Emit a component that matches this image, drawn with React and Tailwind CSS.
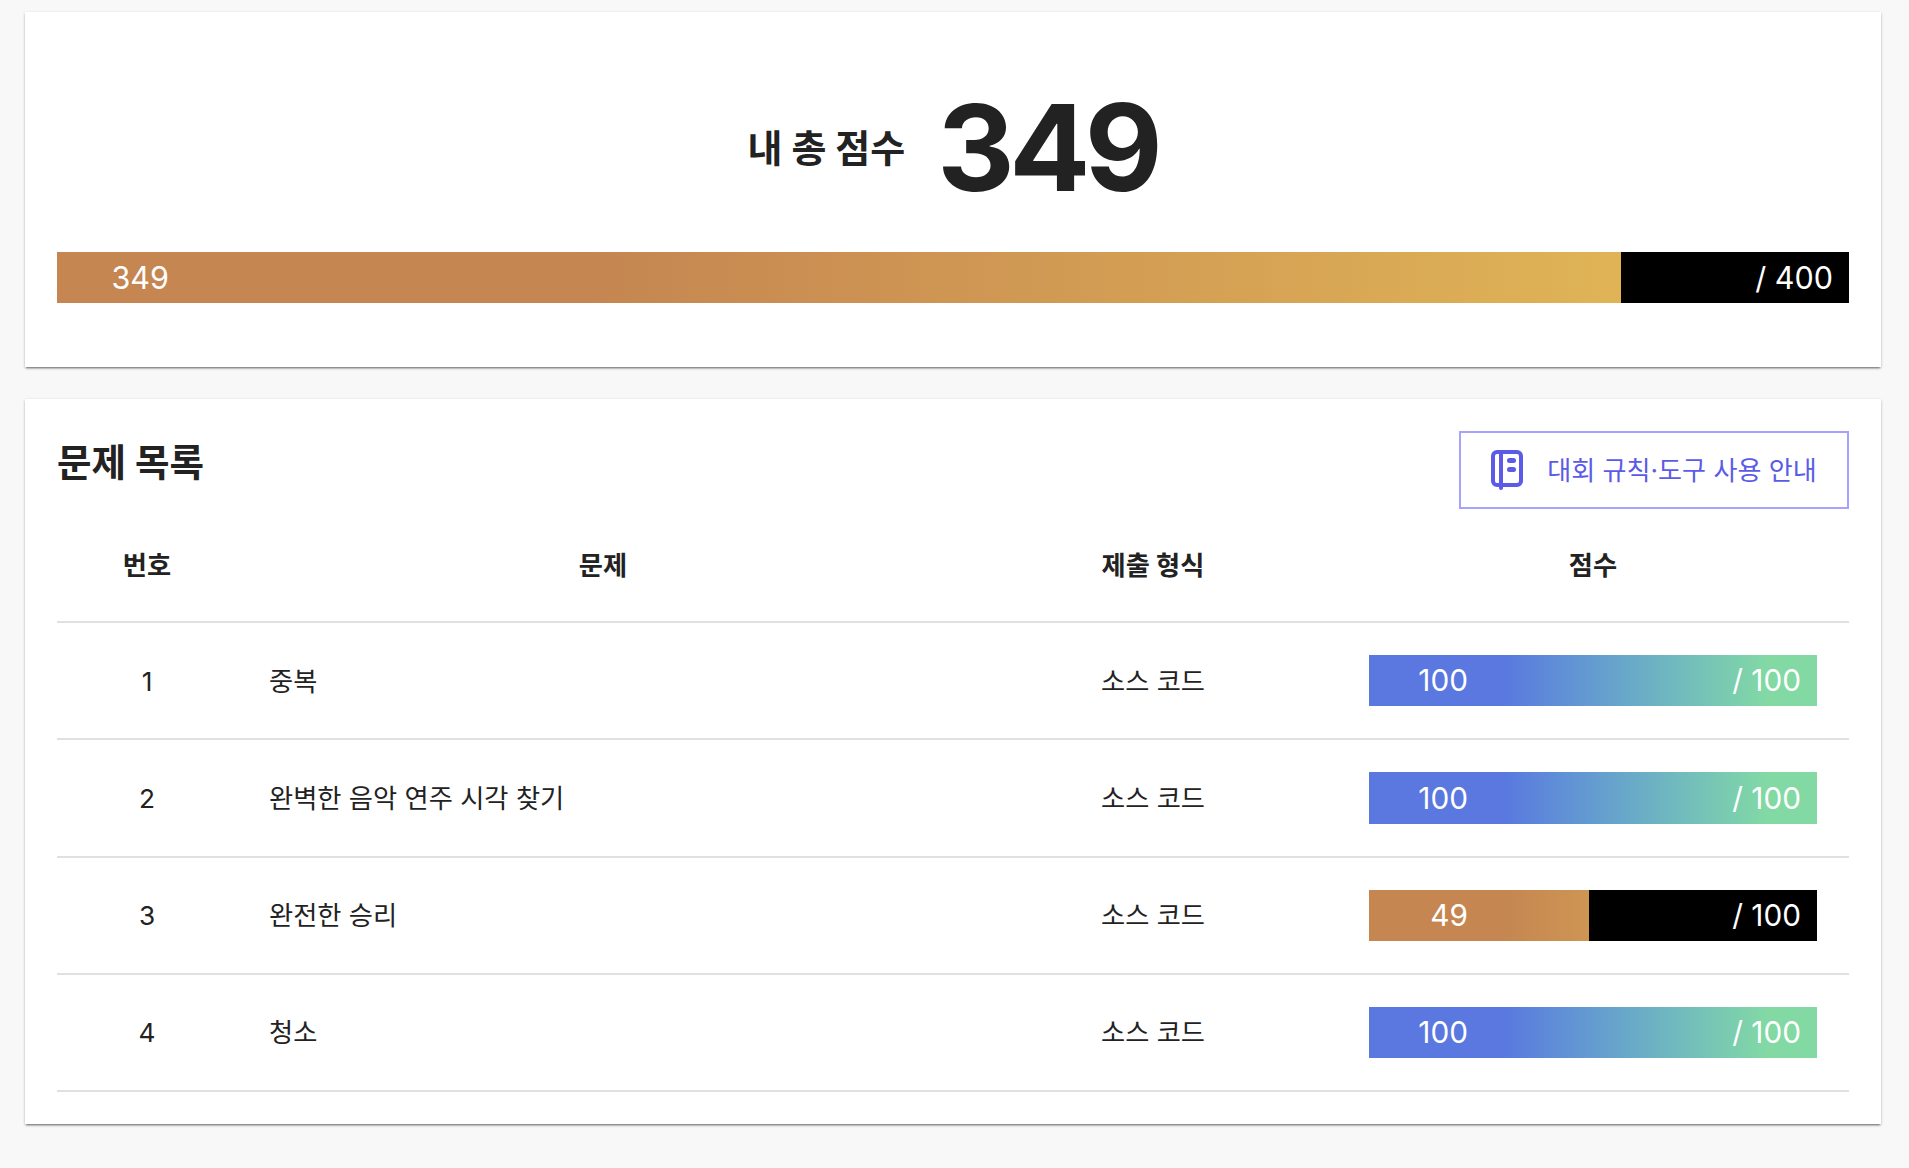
import React from 'react';

const font = { fontFamily: 'Inter, "Noto Sans CJK KR", sans-serif' };

const problems = [
  { id: 1, title: '중복', score: 100 },
  { id: 2, title: '완벽한 음악 연주 시각 찾기', score: 100 },
  { id: 3, title: '완전한 승리', score: 49 },
  { id: 4, title: '청소', score: 100 },
];

function ScoreBar({ score, max, labelWidth, textSize }) {
  const full = score === max;
  return (
    <div
      className={`relative flex h-[51.25px] items-center justify-between overflow-hidden text-white ${textSize} ${
        full
          ? 'bg-linear-to-r from-[#5a78e0] from-30% to-[#82d9a4] to-89%'
          : 'bg-linear-to-r from-[#c58651] from-30% to-[#e0b556] to-89%'
      }`}
    >
      {/* black covers the part of the track that was not scored */}
      <div className="absolute inset-y-0 right-0 bg-black" style={{ width: `${100 - (score / max) * 100}%` }} />
      <span className={`relative text-right ${labelWidth}`}>{score}</span>
      <span className="relative pr-4">/ {max}</span>
    </div>
  );
}

function BookIcon() {
  return (
    <svg viewBox="0 0 32 40" className="h-10 w-8 fill-none stroke-[#5b5be8]" strokeWidth="4">
      <rect x="2" y="2" width="28" height="33" rx="4" />
      <path d="M10 2v36" strokeLinecap="round" />
      <path d="M18.5 10.5h4M18.5 19.5h4" strokeWidth="5" strokeLinecap="round" />
    </svg>
  );
}

export default function App() {
  return (
    <div style={font} className="min-h-[1168px] w-full bg-[#f8f8f8] pt-3 pl-[25px] text-[#222]">
      <div className="flex w-[1856px] flex-col gap-8">
        {/* Total score */}
        <section className="bg-white px-8 pb-16 shadow-[0_1px_3px_rgba(0,0,0,0.2),0_2px_2px_-1px_rgba(0,0,0,0.5)]">
          <div className="flex h-[240px] items-center justify-center gap-8 pt-8">
            <span className="text-[38px] font-bold">내 총 점수</span>
            <span className="pr-[1.5px] text-[120px] leading-none font-bold tracking-[-5.6px]">349</span>
          </div>
          <ScoreBar score={349} max={400} labelWidth="w-[112px]" textSize="text-[30.5px]" />
        </section>

        {/* Problem list */}
        <section className="bg-white px-8 pt-8 pb-8 shadow-[0_1px_3px_rgba(0,0,0,0.2),0_2px_2px_-1px_rgba(0,0,0,0.5)]">
          <div className="flex items-start justify-between">
            <h2 className="text-[37.5px] leading-[64px] font-bold">문제 목록</h2>
            <button className="flex h-[78px] w-[390px] items-center justify-center gap-6 border-2 border-[#a5a3ff] text-[26.1px] text-[#5b5be8]">
              <BookIcon />
              <span>대회 규칙·도구 사용 안내</span>
            </button>
          </div>

          <div className="grid h-[113.75px] grid-cols-[180px_732px_368px_512px] items-center border-b-2 border-[#e0e0e0] pt-[1.5px] text-center text-[26.25px] font-bold">
            <div>번호</div>
            <div>문제</div>
            <div>제출 형식</div>
            <div>점수</div>
          </div>

          {problems.map((p) => (
            <div
              key={p.id}
              className="grid h-[117.25px] grid-cols-[180px_732px_368px_512px] items-center border-b-2 border-[#e0e0e0] text-[26.25px]"
            >
              <div className="pt-[1.5px] text-center">{p.id}</div>
              <div className="px-8 pt-[1.5px]">{p.title}</div>
              <div className="pt-[1.5px] text-center">소스 코드</div>
              <div className="px-8">
                <ScoreBar score={p.score} max={100} labelWidth="w-[99px]" textSize="text-[29.75px]" />
              </div>
            </div>
          ))}
        </section>
      </div>
    </div>
  );
}
